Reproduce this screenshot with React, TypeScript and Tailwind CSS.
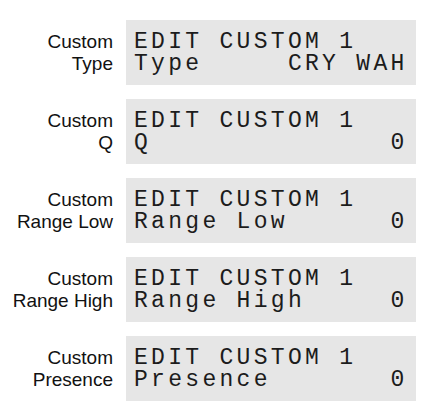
import React from "react";

const rows = [
  { label: ["Custom", "Type"], param: "Type", value: "CRY WAH" },
  { label: ["Custom", "Q"], param: "Q", value: "0" },
  { label: ["Custom", "Range Low"], param: "Range Low", value: "0" },
  { label: ["Custom", "Range High"], param: "Range High", value: "0" },
  { label: ["Custom", "Presence"], param: "Presence", value: "0" },
];

// 16-character LCD line, value pushed to the right edge
const lcdLine = (left: string, right: string) =>
  left + " ".repeat(Math.max(1, 16 - left.length - right.length)) + right;

const App: React.FC = () => {
  return (
    <div className="w-[432px] h-[409px] bg-white pt-[20px] flex flex-col gap-[14px]">
      {rows.map((r) => (
        <div key={r.param} className="flex items-center">
          <div
            className="w-[113px] text-right text-[19px] leading-[22px] text-[#111]"
            style={{ fontFamily: '"Liberation Sans", Arial, sans-serif' }}
          >
            <div>{r.label[0]}</div>
            <div>{r.label[1]}</div>
          </div>
          <div className="ml-[13px] w-[290px] h-[65px] bg-[#e6e6e6] pl-[8px] pt-[11px]">
            <div
              className="text-[23px] leading-[22px] tracking-[3.3px] text-[#1c1c1c] whitespace-pre"
              style={{ fontFamily: '"Liberation Mono", "DejaVu Sans Mono", monospace' }}
            >
              <div>EDIT CUSTOM 1</div>
              <div>{lcdLine(r.param, r.value)}</div>
            </div>
          </div>
        </div>
      ))}
    </div>
  );
};

export default App;
